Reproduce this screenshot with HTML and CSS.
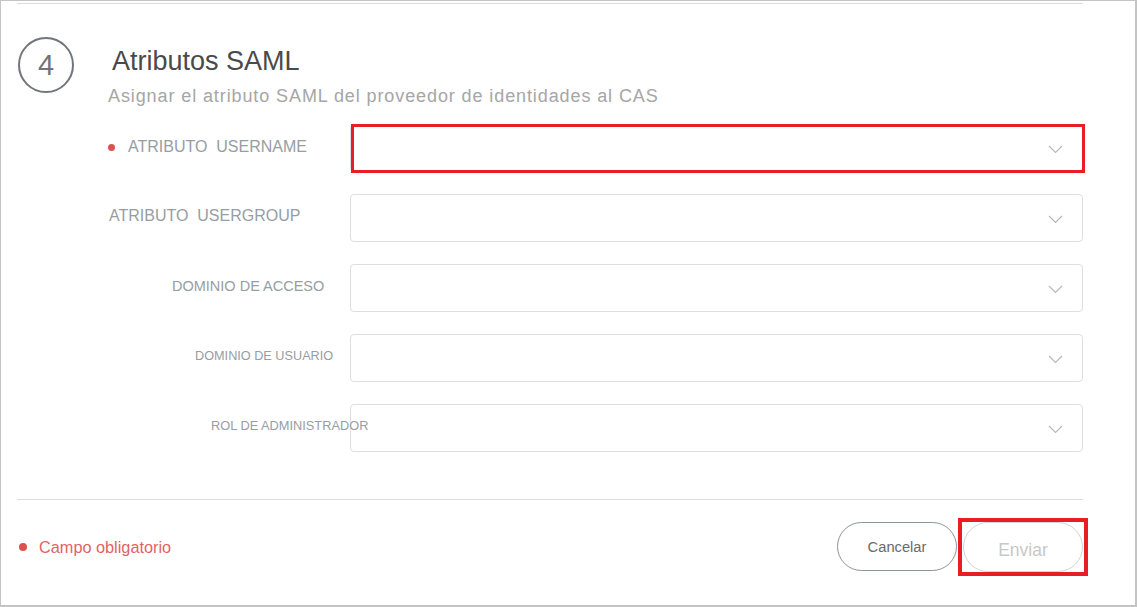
FILE: index.html
```html
<!DOCTYPE html>
<html lang="es">
<head>
<meta charset="utf-8">
<title>Atributos SAML</title>
<link rel="stylesheet" href="styles.css">
</head>
<body>
<div class="frame">
  <div class="rule-top"></div>
  <div class="header">
    <div class="step">4</div>
    <div class="head-text">
      <div class="title">Atributos SAML</div>
      <div class="subtitle">Asignar el atributo SAML del proveedor de identidades al CAS</div>
    </div>
  </div>

  <div class="form">
    <div class="row">
      <div class="label l-username"><span class="req-dot"></span>ATRIBUTO&nbsp; USERNAME</div>
      <div class="select highlight">
        <svg class="chev" width="15" height="9" viewBox="0 0 15 9"><polyline points="1,1 7.5,7.5 14,1" fill="none" stroke="#b8b8b8" stroke-width="1.2"/></svg>
      </div>
    </div>
    <div class="row">
      <div class="label l-usergroup">ATRIBUTO&nbsp; USERGROUP</div>
      <div class="select">
        <svg class="chev" width="15" height="9" viewBox="0 0 15 9"><polyline points="1,1 7.5,7.5 14,1" fill="none" stroke="#b8b8b8" stroke-width="1.2"/></svg>
      </div>
    </div>
    <div class="row">
      <div class="label l-acceso">DOMINIO DE ACCESO</div>
      <div class="select">
        <svg class="chev" width="15" height="9" viewBox="0 0 15 9"><polyline points="1,1 7.5,7.5 14,1" fill="none" stroke="#b8b8b8" stroke-width="1.2"/></svg>
      </div>
    </div>
    <div class="row">
      <div class="label l-usuario">DOMINIO DE USUARIO</div>
      <div class="select">
        <svg class="chev" width="15" height="9" viewBox="0 0 15 9"><polyline points="1,1 7.5,7.5 14,1" fill="none" stroke="#b8b8b8" stroke-width="1.2"/></svg>
      </div>
    </div>
    <div class="row">
      <div class="label l-rol">ROL DE ADMINISTRADOR</div>
      <div class="select">
        <svg class="chev" width="15" height="9" viewBox="0 0 15 9"><polyline points="1,1 7.5,7.5 14,1" fill="none" stroke="#b8b8b8" stroke-width="1.2"/></svg>
      </div>
    </div>
  </div>

  <div class="rule-bottom"></div>

  <div class="footer">
    <div class="required"><span class="req-dot big"></span>Campo obligatorio</div>
    <div class="buttons">
      <button class="btn btn-cancel" type="button">Cancelar</button>
      <button class="btn btn-send highlight" type="button">Enviar</button>
    </div>
  </div>
</div>
</body>
</html>
```
FILE: styles.css
```css
html, body {
  margin: 0;
  padding: 0;
  background: #ffffff;
}

body {
  font-family: "Liberation Sans", Arial, sans-serif;
}

.frame {
  width: 1137px;
  height: 607px;
  box-sizing: border-box;
  border: 1px solid #c4c4c4;
  border-right-width: 2px;
  border-bottom-width: 2px;
  padding: 0 52px 0 16px;
  background: #fff;
}

.rule-top {
  height: 1px;
  background: #dcdcdc;
  margin-top: 2px;
}

.header {
  display: flex;
  margin-top: 33px;
}

.step {
  width: 56px;
  height: 56px;
  box-sizing: border-box;
  border: 2px solid #70767b;
  border-radius: 50%;
  display: flex;
  align-items: center;
  justify-content: center;
  font-size: 29px;
  color: #707478;
  flex: none;
  margin-left: 1px;
}

.head-text {
  margin-left: 34px;
  margin-top: 8px;
}

.title {
  font-size: 27px;
  line-height: 32px;
  color: #4a4a4a;
  padding-left: 4px;
}

.subtitle {
  margin-top: 8px;
  font-size: 18px;
  line-height: 22px;
  color: #a6a6a6;
  letter-spacing: 0.9px;
}

.form {
  margin-top: 17px;
  display: flex;
  flex-direction: column;
  gap: 22px;
}

.row {
  display: flex;
  align-items: center;
  height: 48px;
}

.label {
  width: 333px;
  flex: none;
  white-space: nowrap;
  color: #989da2;
  position: relative;
  z-index: 1;
  padding-bottom: 4px;
  box-sizing: border-box;
  display: flex;
  align-items: center;
}

.l-username { padding-left: 91px; font-size: 16px; padding-bottom: 2px; }
.l-usergroup { padding-left: 92px; font-size: 16px; padding-bottom: 5px; }
.l-acceso { padding-left: 155px; font-size: 14.5px; padding-bottom: 5px; }
.l-usuario { padding-left: 178px; font-size: 12.7px; padding-bottom: 5px; }
.l-rol { padding-left: 194px; font-size: 12.8px; padding-bottom: 5px; }

.req-dot {
  display: inline-block;
  width: 7px;
  height: 7px;
  border-radius: 50%;
  background: #d9534f;
  margin-right: 13px;
  flex: none;
}

.select {
  flex: 1;
  height: 48px;
  box-sizing: border-box;
  border: 1px solid #dedede;
  border-radius: 4px;
  position: relative;
  display: flex;
  align-items: center;
  justify-content: flex-end;
  padding-right: 19px;
  padding-top: 2px;
}

.chev {
  display: block;
}

.select.highlight::after {
  content: "";
  position: absolute;
  top: -1px;
  left: 0;
  right: -3px;
  bottom: -2px;
  border: 3px solid #e81d25;
}

.rule-bottom {
  height: 1px;
  background: #dcdcdc;
  margin-top: 47px;
}

.footer {
  display: flex;
  align-items: center;
  justify-content: space-between;
  margin-top: 22px;
}

.required {
  display: flex;
  align-items: center;
  font-size: 16.3px;
  color: #e06464;
  padding-left: 2px;
}

.req-dot.big {
  width: 8px;
  height: 8px;
  margin-right: 12px;
}

.buttons {
  display: flex;
  gap: 6px;
}

.btn {
  width: 120px;
  height: 49px;
  border-radius: 25px;
  background: #fff;
  font-family: "Liberation Sans", Arial, sans-serif;
  padding: 0;
  position: relative;
}

.btn-cancel {
  border: 1px solid #8d9399;
  color: #6a6a6a;
  font-size: 14.7px;
}

.btn-send {
  border: 1px solid #d4d4d4;
  color: #c8c8c8;
  font-size: 17.5px;
  height: 50px;
  padding-top: 6px;
}

.btn-send.highlight::after {
  content: "";
  position: absolute;
  top: -5px;
  left: -6px;
  right: -6px;
  bottom: -5px;
  border: 4px solid #e81d25;
  border-radius: 0;
}
```
